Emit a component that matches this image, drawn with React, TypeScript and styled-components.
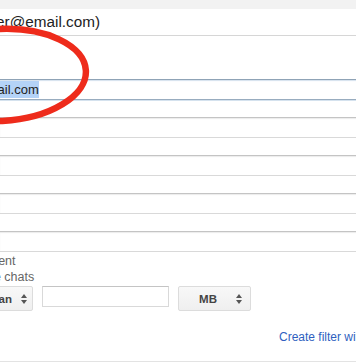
import styled, { createGlobalStyle } from "styled-components";

const GlobalStyle = createGlobalStyle`
  html, body {
    margin: 0;
    padding: 0;
    background: #fff;
  }
  body {
    font-family: "Liberation Sans", Arial, sans-serif;
    overflow: hidden;
  }
`;

const Page = styled.div`
  position: relative;
  width: 356px;
  height: 364px;
  overflow: hidden;
  background: #fff;
`;

const TopBand = styled.div`
  height: 9px;
  background: #f2f2f2;
`;

const Header = styled.div`
  height: 26px;
  border-bottom: 1px solid #d6d6d6;
  display: flex;
  align-items: center;
  font-size: 15.3px;
  color: #222;
  white-space: nowrap;

  span {
    margin-left: -60px;
  }
`;

const Fields = styled.div`
  display: flex;
  flex-direction: column;
  gap: 17px;
  padding-top: 43px;
`;

const TextField = styled.div<{ $focused?: boolean }>`
  box-sizing: border-box;
  height: 21px;
  margin-left: -1px;
  width: calc(100% + 20px);
  display: flex;
  align-items: center;
  font-size: 13px;
  color: #222;
  white-space: nowrap;
  border: 1px solid ${(p) => (p.$focused ? "#98acbf" : "#d9d9d9")};
  border-top-color: ${(p) => (p.$focused ? "#8fa3b6" : "#c4c4c4")};
  box-shadow: ${(p) =>
    p.$focused
      ? "inset 0 1px 1px #d5e2ee, 0 1px 0 #d5e2ee"
      : "inset 0 1px 1px #ececec"};
  background: #fff;
`;

const Selected = styled.span`
  margin-left: -59px;
  background: #b4d3f7;
  padding: 1px 0;
`;

const Checks = styled.div`
  display: flex;
  flex-direction: column;
  padding-top: 1px;
`;

const CheckRow = styled.label<{ $shift: number }>`
  display: flex;
  align-items: center;
  gap: 6px;
  height: 16px;
  margin-left: ${(p) => p.$shift}px;
  font-size: 12.5px;
  color: #666;
  white-space: nowrap;
`;

const SizeRow = styled.div`
  display: flex;
  align-items: flex-start;
  gap: 9px;
  margin-top: 1px;
  height: 25px;
`;

const SelectBox = styled.div<{ $width: number; $shift?: number; $pad: number }>`
  box-sizing: border-box;
  width: ${(p) => p.$width}px;
  height: 25px;
  margin-left: ${(p) => p.$shift ?? 0}px;
  padding: 0 ${(p) => p.$pad}px 0 0;
  display: flex;
  align-items: center;
  justify-content: flex-end;
  gap: 9px;
  border: 1px solid #dcdcdc;
  border-radius: 2px;
  background: linear-gradient(#f8f8f8, #efefef);
  font-size: 11.5px;
  font-weight: bold;
  color: #444;
  white-space: nowrap;
  flex-shrink: 0;
`;

const SelectLabel = styled.span<{ $grow?: boolean }>`
  flex: ${(p) => (p.$grow ? 1 : "none")};
  text-align: center;
  padding-left: ${(p) => (p.$grow ? "10px" : "0")};
`;

const SizeInput = styled.div`
  box-sizing: border-box;
  width: 127px;
  height: 21px;
  border: 1px solid #d9d9d9;
  border-top-color: #c4c4c4;
  background: #fff;
  flex-shrink: 0;
`;

const LinkRow = styled.div`
  height: 51px;
  border-bottom: 1px solid #e3e3e3;
  display: flex;
  align-items: center;
  padding-left: 279px;
  padding-top: 2px;
  box-sizing: border-box;
  white-space: nowrap;
`;

const Link = styled.a`
  font-size: 12px;
  color: #2f5fc0;
  text-decoration: none;
`;

const Annotation = styled.svg`
  position: absolute;
  left: 0;
  top: 0;
  pointer-events: none;
`;

const Arrows = () => (
  <svg width="6" height="10" viewBox="0 0 6 10">
    <path d="M3 0 L6 4 L0 4 Z M0 6 L6 6 L3 10 Z" fill="#555" />
  </svg>
);

export default function App() {
  return (
    <>
      <GlobalStyle />
      <Page>
        <TopBand />
        <Header>
          <span>from:(user@email.com)</span>
        </Header>
        <Fields>
          <TextField $focused>
            <Selected>user@email.com</Selected>
          </TextField>
          <TextField />
          <TextField />
          <TextField />
          <TextField />
        </Fields>
        <Checks>
          <CheckRow $shift={-91}>
            <input type="checkbox" style={{ margin: 0 }} />
            Has attachment
          </CheckRow>
          <CheckRow $shift={-90}>
            <input type="checkbox" style={{ margin: 0 }} />
            Don't include chats
          </CheckRow>
        </Checks>
        <SizeRow>
          <SelectBox $width={100} $shift={-67} $pad={5}>
            <SelectLabel>greater than</SelectLabel>
            <Arrows />
          </SelectBox>
          <SizeInput />
          <SelectBox $width={73} $pad={8}>
            <SelectLabel $grow>MB</SelectLabel>
            <Arrows />
          </SelectBox>
        </SizeRow>
        <LinkRow>
          <Link href="#">Create filter with this search »</Link>
        </LinkRow>
        <Annotation width="356" height="364" viewBox="0 0 356 364">
          <ellipse
            cx="0"
            cy="75"
            rx="86"
            ry="46"
            transform="rotate(-3 0 75)"
            fill="none"
            stroke="#ee2b1b"
            strokeWidth="6.5"
          />
        </Annotation>
      </Page>
    </>
  );
}
